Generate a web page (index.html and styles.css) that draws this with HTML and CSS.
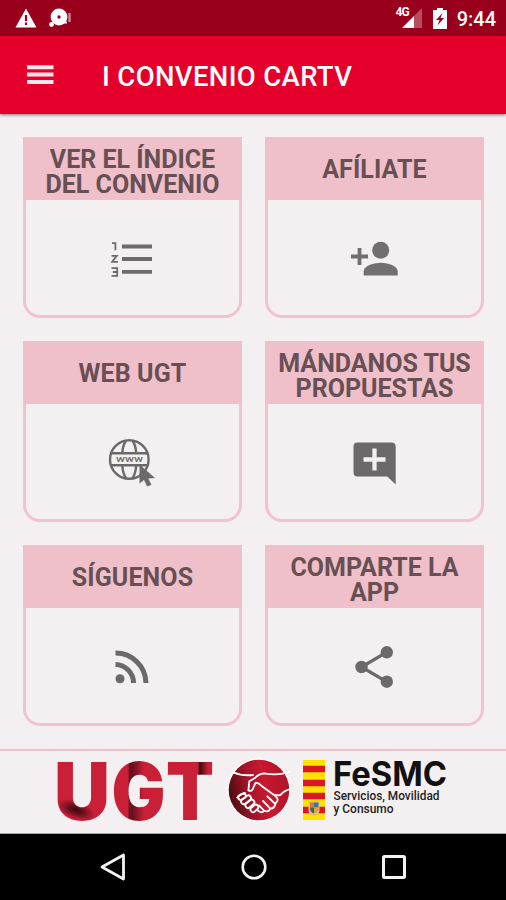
FILE: index.html
```html
<!DOCTYPE html>
<html lang="es">
<head>
    <meta charset="UTF-8">
    <title>I CONVENIO CARTV</title>
    <link rel="stylesheet" href="styles.css">
</head>
<body>

    <div class="status-bar">
        <svg class="alert-icon" width="22" height="20" viewBox="0 0 22 20">
            <path d="M11 0.5L21.5 19.5H0.5Z" fill="#fff"/>
            <path d="M11 7v6M11 14.5v2.5" stroke="#98001b" stroke-width="2.2"/>
        </svg>
        <svg class="sync-icon" width="24" height="21" viewBox="0 0 24 21">
            <circle cx="10" cy="9" r="8.4" fill="#fff"/>
            <circle cx="2.5" cy="16.5" r="2.4" fill="#fff"/>
            <circle cx="10" cy="9" r="1.7" fill="#98001b"/>
            <path d="M14 14.5h4" stroke="#fff" stroke-width="2"/>
            <path d="M20.5 5v9" stroke="#fff" stroke-opacity="0.5" stroke-width="2.5"/>
        </svg>
        <div class="status-right">
            <span class="network">4G</span>
            <svg class="signal-icon" width="20" height="20" viewBox="0 0 20 20">
                <path d="M20 0V20H11V9Z" fill="#fff" fill-opacity="0.3"/>
                <path d="M12 8V20H0Z" fill="#fff"/>
            </svg>
            <svg class="battery-icon" width="14" height="21" viewBox="0 0 14 21">
                <path d="M4 0h6v2h4v19H0V2h4z" fill="#fff"/>
                <path d="M9.5 5L3 12h3.5L4.5 17.5L11 10H7.5z" fill="#98001b"/>
            </svg>
            <span class="clock">9:44</span>
        </div>
    </div>

    <div class="toolbar">
        <svg class="menu-icon" width="27" height="20" viewBox="0 0 27 20">
            <path d="M0 2.2h26.5M0 9.6h26.5M0 17h26.5" stroke="#fff" stroke-opacity="0.9" stroke-width="4"/>
        </svg>
        <h1>I CONVENIO CARTV</h1>
    </div>

    <div class="menu-grid">
        <div class="card">
            <h2>VER EL ÍNDICE<br>DEL CONVENIO</h2>
            <div class="card-body">
                <svg width="42" height="36" viewBox="0 0 42 36">
                    <path d="M11 5.5h30M11 18h30M11 30.8h30" stroke="#6f6a6b" stroke-width="3.8"/>
                    <path d="M1 2.2h3.4v7M0.5 14.8h5.3l-4.6 6h5.8M0.5 27.2h5.7v7.6h-5.7M1.8 31h4" fill="none" stroke="#6f6a6b" stroke-width="1.8"/>
                </svg>
            </div>
        </div>

        <div class="card">
            <h2 class="single">AFÍLIATE</h2>
            <div class="card-body">
                <svg width="48" height="36" viewBox="0 0 48 36">
                    <circle cx="30.7" cy="9.3" r="8.5" fill="#736e6f"/>
                    <path d="M13.7 34.5v-4.2c0-5.7 11.3-8.5 17-8.5s17 2.8 17 8.5v4.2z" fill="#736e6f"/>
                    <path d="M1 15.5h17M9.5 7v17" stroke="#736e6f" stroke-width="3.8"/>
                </svg>
            </div>
        </div>

        <div class="card">
            <h2 class="single">WEB UGT</h2>
            <div class="card-body">
                <svg width="48" height="48" viewBox="0 0 48 48">
                    <g fill="none" stroke="#6d6869" stroke-width="2.4">
                        <circle cx="21.3" cy="20.5" r="19.3"/>
                        <path d="M3 14.2h36.5M3 26.2h36.5M18 1.5q-3.3 5-3.7 12.7M24.5 1.5q3.3 5 3.7 12.7M14.3 26.2q.4 8 3.7 13M28.2 26.2q-.4 8-3.7 13"/>
                    </g>
                    <text class="www" x="8" y="23" textLength="27" lengthAdjust="spacingAndGlyphs">www</text>
                    <path d="M31.5 25.5v19l4.5-3.5 3.2 6.5 4.3-1.8-3.2-6.2 6.7-.5z" fill="#6d6869"/>
                </svg>
            </div>
        </div>

        <div class="card">
            <h2>MÁNDANOS TUS<br>PROPUESTAS</h2>
            <div class="card-body">
                <svg width="43" height="43" viewBox="0 0 43 43">
                    <path d="M4.5 0.5h34Q42.7 0.5 42.7 4.7V42.5L34.2 34.5H4.5Q0.5 34.5 0.5 30.3V4.7Q0.5 0.5 4.5 0.5z" fill="#6d6869"/>
                    <path d="M10.5 17.5h22M21.5 6.5v22" stroke="#f4eff0" stroke-width="4.3"/>
                </svg>
            </div>
        </div>

        <div class="card">
            <h2 class="single">SÍGUENOS</h2>
            <div class="card-body">
                <svg width="34" height="34" viewBox="0 0 34 34">
                    <circle cx="5" cy="28.8" r="4.5" fill="#6d6869"/>
                    <path d="M0.5 14.5A18.5 18.5 0 0 1 18.5 33M0.5 3A30.5 30.5 0 0 1 31 33" fill="none" stroke="#6d6869" stroke-width="5"/>
                </svg>
            </div>
        </div>

        <div class="card">
            <h2>COMPARTE LA<br>APP</h2>
            <div class="card-body">
                <svg width="38" height="42" viewBox="0 0 38 42">
                    <path d="M31.8 6.2L6.5 21L31.8 35.8" fill="none" stroke="#6d6869" stroke-width="3.3"/>
                    <circle cx="31.8" cy="6.3" r="6.2" fill="#6d6869"/>
                    <circle cx="6.5" cy="21" r="6.2" fill="#6d6869"/>
                    <circle cx="31.8" cy="35.7" r="6.2" fill="#6d6869"/>
                </svg>
            </div>
        </div>
    </div>

    <div class="footer">
        <svg class="ugt-logo" width="158" height="64" viewBox="0 0 158 64">
            <defs>
                <radialGradient id="shadeU" gradientUnits="userSpaceOnUse" cx="0" cy="0" r="1" gradientTransform="translate(19 50) rotate(20) scale(20 9)">
                    <stop offset="0" stop-color="#3a0a0e"/>
                    <stop offset="0.4" stop-color="#6b101c"/>
                    <stop offset="1" stop-color="#c91f37"/>
                </radialGradient>
                <linearGradient id="shadeG" gradientUnits="userSpaceOnUse" x1="71" y1="0" x2="87" y2="0">
                    <stop offset="0" stop-color="#c91f37"/>
                    <stop offset="0.08" stop-color="#6b101c"/>
                    <stop offset="0.3" stop-color="#6b101c"/>
                    <stop offset="1" stop-color="#c91f37"/>
                </linearGradient>
                <linearGradient id="shadeT" gradientUnits="userSpaceOnUse" x1="109" y1="0" x2="158" y2="0">
                    <stop offset="0.66" stop-color="#c91f37"/>
                    <stop offset="0.67" stop-color="#2a0808"/>
                    <stop offset="0.86" stop-color="#c91f37"/>
                </linearGradient>
            </defs>
            <text class="ugt" x="-3" y="60" textLength="56" lengthAdjust="spacingAndGlyphs" fill="url(#shadeU)">U</text>
            <text class="ugt" x="54.5" y="60" textLength="54" lengthAdjust="spacingAndGlyphs" fill="url(#shadeG)">G</text>
            <text class="ugt" x="109" y="60" textLength="48" lengthAdjust="spacingAndGlyphs" fill="url(#shadeT)">T</text>
        </svg>

        <svg class="hands-logo" width="64" height="64" viewBox="0 0 192 192">
            <defs>
                <linearGradient id="disc" x1="0" y1="0.6" x2="1" y2="0.4">
                    <stop offset="0" stop-color="#4a0b0e"/>
                    <stop offset="0.35" stop-color="#a5142a"/>
                    <stop offset="0.6" stop-color="#c8192f"/>
                    <stop offset="1" stop-color="#ae1427"/>
                </linearGradient>
            </defs>
            <circle cx="96" cy="96" r="95" fill="#fff"/>
            <circle cx="96" cy="96" r="91" fill="url(#disc)"/>
            <g fill="none" stroke="#fff" stroke-width="5.5" stroke-linecap="round" stroke-linejoin="round">
                <path d="M18 43Q44 54 78 51M188 40Q158 54 111 46Q94 48 84 60L67 70Q65 90 64 97Q75 103 79 89L86 74Q97 75 104 84L145 114Q158 125 147 134"/>
                <path d="M188 94Q174 96 160 111Q150 113 145 110M31 119Q42 106 54 105"/>
                <rect x="33" y="109" width="24" height="14" rx="7" transform="rotate(-28 45 116)"/>
                <rect x="41" y="118" width="33" height="15" rx="7" transform="rotate(-37 57 126)"/>
                <rect x="54" y="130" width="30" height="15" rx="7" transform="rotate(-40 69 138)"/>
                <rect x="69" y="144" width="26" height="15" rx="7" transform="rotate(-42 82 151)"/>
                <path d="M92 157Q104 168 111 158L96 142M111 158Q125 164 130 152L108 129M130 152Q143 151 145 138L121 115"/>
            </g>
        </svg>

        <svg class="flag" width="22" height="60" viewBox="0 0 22 60">
            <path d="M0 0h22v60H0z" fill="#ffe100"/>
            <path d="M0 9h22M0 23h22M0 36h22M0 50h22" stroke="#dc1724" stroke-width="6.5"/>
            <path d="M5.5 41h11v10q-1 4-5.5 5q-4.5-1-5.5-5z" fill="#d9c28a"/>
            <path d="M7 42.5h4v5H7z" fill="#d77c28"/>
            <path d="M11 42.5h4.5v5H11z" fill="#3f73a8"/>
            <path d="M7 47.5h4v6q-4-1-4-6z" fill="#4d557d"/>
            <path d="M11 47.5h4.5q0 5-4.5 6z" fill="#e2a51f"/>
        </svg>

        <svg class="fesmc" width="118" height="62" viewBox="0 0 118 62">
            <text class="fesmc-name" x="0" y="26" textLength="114" lengthAdjust="spacingAndGlyphs">FeSMC</text>
            <text class="fesmc-text" x="0.5" y="40" textLength="106" lengthAdjust="spacingAndGlyphs">Servicios, Movilidad</text>
            <text class="fesmc-text" x="0.5" y="53" textLength="60" lengthAdjust="spacingAndGlyphs">y Consumo</text>
        </svg>
    </div>

    <div class="nav-bar">
        <svg width="26" height="28" viewBox="0 0 26 28">
            <path d="M2 14L23.5 2V26z" fill="none" stroke="#f3f3f3" stroke-width="2.8" stroke-linejoin="round"/>
        </svg>
        <svg width="26" height="28" viewBox="0 0 26 28">
            <circle cx="13" cy="14" r="11.3" fill="none" stroke="#f3f3f3" stroke-width="2.6"/>
        </svg>
        <svg width="26" height="28" viewBox="0 0 26 28">
            <rect x="2.5" y="3.5" width="21" height="21" rx="1" fill="none" stroke="#f3f3f3" stroke-width="3"/>
        </svg>
    </div>

</body>
</html>
```

FILE: styles.css
```css
* {
    box-sizing: border-box;
}

body {
    display: flex;
    flex-direction: column;
    margin: 0;
    width: 506px;
    height: 900px;
    overflow: hidden;
    font-family: Roboto, sans-serif;
    background: #f4eff0;
}

svg {
    display: block;
    flex-shrink: 0;
    overflow: visible;
}

.status-bar {
    display: flex;
    align-items: center;
    height: 36px;
    padding: 0 10px 0 15px;
    background: #98001b;
}

.sync-icon {
    margin-left: 12px;
}

.status-right {
    display: flex;
    align-items: center;
    margin-left: auto;
}

.network {
    align-self: flex-start;
    margin-right: -7px;
    padding-top: 1px;
    font-size: 12px;
    font-weight: 700;
    line-height: 12px;
    letter-spacing: -1px;
    color: #fff;
}

.battery-icon {
    margin-left: 11px;
}

.clock {
    margin-left: 10px;
    padding-top: 2px;
    font-size: 20px;
    font-weight: 500;
    color: #fff;
}

.toolbar {
    display: flex;
    align-items: center;
    height: 78px;
    padding-left: 27px;
    background: #e4002b;
    box-shadow: 0 1px 3px rgba(0, 0, 0, 0.5);
}

h1 {
    margin: 2px 0 0 48px;
    font-size: 27.5px;
    font-weight: 500;
    letter-spacing: 0.35px;
    color: #fff;
    white-space: nowrap;
}

.menu-grid {
    display: grid;
    grid-template-columns: 219px 219px;
    grid-auto-rows: 181px;
    gap: 23px;
    height: 635px;
    padding: 23px;
}

.card {
    display: flex;
    flex-direction: column;
    border: 3px solid #f0c3ce;
    border-top: none;
    border-radius: 0 0 17px 17px;
}

h2 {
    display: flex;
    align-items: center;
    justify-content: center;
    height: 63px;
    margin: 0 -3px;
    padding-top: 7px;
    font-size: 25px;
    font-weight: 700;
    line-height: 25px;
    text-align: center;
    color: #674f54;
    background: #efbfca;
    white-space: nowrap;
}

.single {
    padding-top: 1px;
    letter-spacing: 0.1px;
}

.card-body {
    display: flex;
    flex: 1;
    align-items: center;
    justify-content: center;
    padding: 3px 1px 0 0;
}

.www {
    font-size: 9px;
    font-weight: 500;
    fill: #6d6869;
}

.footer {
    display: flex;
    height: 85px;
    padding: 9px 0 0 57px;
    border-top: 2px solid #efbfca;
    border-bottom: 1px solid #aaa6a7;
}

.ugt {
    font-family: Inter, sans-serif;
    font-size: 80px;
    font-weight: 900;
}

.hands-logo {
    margin: -2px 0 0 12px;
}

.flag {
    margin-left: 12px;
}

.fesmc {
    margin-left: 8px;
}

.fesmc-name {
    font-family: Inter, sans-serif;
    font-size: 34px;
    font-weight: 700;
    fill: #111;
}

.fesmc-text {
    font-size: 12.5px;
    font-weight: 500;
    fill: #222;
}

.nav-bar {
    display: flex;
    align-items: center;
    justify-content: space-between;
    height: 66px;
    padding: 0 99px 0 100px;
    background: #000;
}
```
